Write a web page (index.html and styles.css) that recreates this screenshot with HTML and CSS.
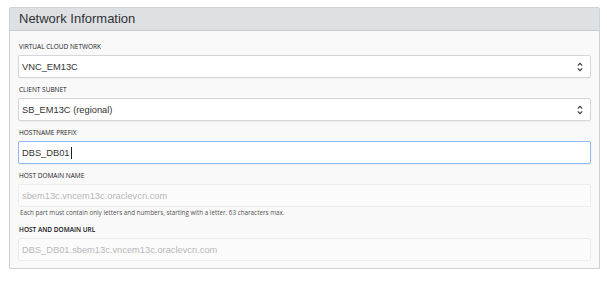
FILE: index.html
```
<!DOCTYPE html>
<html lang="en">
<head>
    <meta charset="UTF-8">
    <title>Network Information</title>
    <link rel="stylesheet" href="styles.css">
</head>
<body>
<div class="panel">
    <div class="panel-header">Network Information</div>
    <div class="panel-body">
        <div class="field">
            <div class="field-label">Virtual cloud network</div>
            <div class="control select">
                <span>VNC_EM13C</span>
                <svg class="arrows" width="6" height="10" viewBox="0 0 6 10"><path d="M0.8 3.6 L3 1.4 L5.2 3.6 M0.8 6.4 L3 8.6 L5.2 6.4" fill="none" stroke="#333" stroke-width="1.1"/></svg>
            </div>
        </div>
        <div class="field">
            <div class="field-label">Client subnet</div>
            <div class="control select">
                <span>SB_EM13C (regional)</span>
                <svg class="arrows" width="6" height="10" viewBox="0 0 6 10"><path d="M0.8 3.6 L3 1.4 L5.2 3.6 M0.8 6.4 L3 8.6 L5.2 6.4" fill="none" stroke="#333" stroke-width="1.1"/></svg>
            </div>
        </div>
        <div class="field">
            <div class="field-label">Hostname prefix</div>
            <div class="control focused">
                <span>DBS_DB01</span><span class="caret"></span>
            </div>
        </div>
        <div class="field">
            <div class="field-label">Host domain name</div>
            <div class="control disabled">
                <span>sbem13c.vncem13c.oraclevcn.com</span>
            </div>
            <div class="help">Each part must contain only letters and numbers, starting with a letter. 63 characters max.</div>
        </div>
        <div class="field">
            <div class="field-label strong">Host and domain URL</div>
            <div class="control disabled">
                <span>DBS_DB01.sbem13c.vncem13c.oraclevcn.com</span>
            </div>
        </div>
    </div>
</div>
</body>
</html>
```

FILE: styles.css
```
body {
    margin: 7px 7px 0 9px;
    background: #fff;
    font-family: "Liberation Sans", Arial, sans-serif;
}
.panel {
    border: 1px solid #cfd2d5;
    border-radius: 2px;
    background: #f9f9f9;
    box-shadow: 0 1px 1px rgba(0, 0, 0, 0.12);
}
.panel-header {
    height: 22px;
    line-height: 22px;
    padding-left: 9px;
    background: #dee1e4;
    border-bottom: 1px solid #c9ccd0;
    color: #333;
    font-size: 13px;
}
.panel-body {
    padding: 11px 8px 7px 8px;
}
.field {
    margin-bottom: 7px;
}
.field:last-child {
    margin-bottom: 0;
}
.field-label {
    height: 10px;
    line-height: 10px;
    margin: 0 0 3px 1px;
    font-family: "Open Sans", sans-serif;
    font-size: 6.5px;
    font-weight: 500;
    text-transform: uppercase;
    color: #222;
}
.field-label.strong {
    font-weight: 600;
    color: #111;
}
.control {
    display: flex;
    align-items: center;
    justify-content: space-between;
    height: 21px;
    padding: 0 7px 0 3px;
    background: #fff;
    border: 1px solid #d4d6d9;
    border-radius: 2px;
    box-shadow: 0 1px 1px rgba(0, 0, 0, 0.04);
    font-size: 9.3px;
    color: #333;
}
.control.focused {
    justify-content: flex-start;
    border-color: #8fb8f2;
}
.caret {
    width: 1px;
    height: 12px;
    margin-left: 1px;
    background: #222;
}
.control.disabled {
    background: #fbfbfb;
    border-color: #ececec;
    box-shadow: none;
    color: #b8b8b8;
}
.arrows {
    display: block;
}
.help {
    height: 10px;
    line-height: 10px;
    margin: 1px 0 4px 2px;
    font-family: "Open Sans", sans-serif;
    font-size: 6.3px;
    color: #555;
}
```
